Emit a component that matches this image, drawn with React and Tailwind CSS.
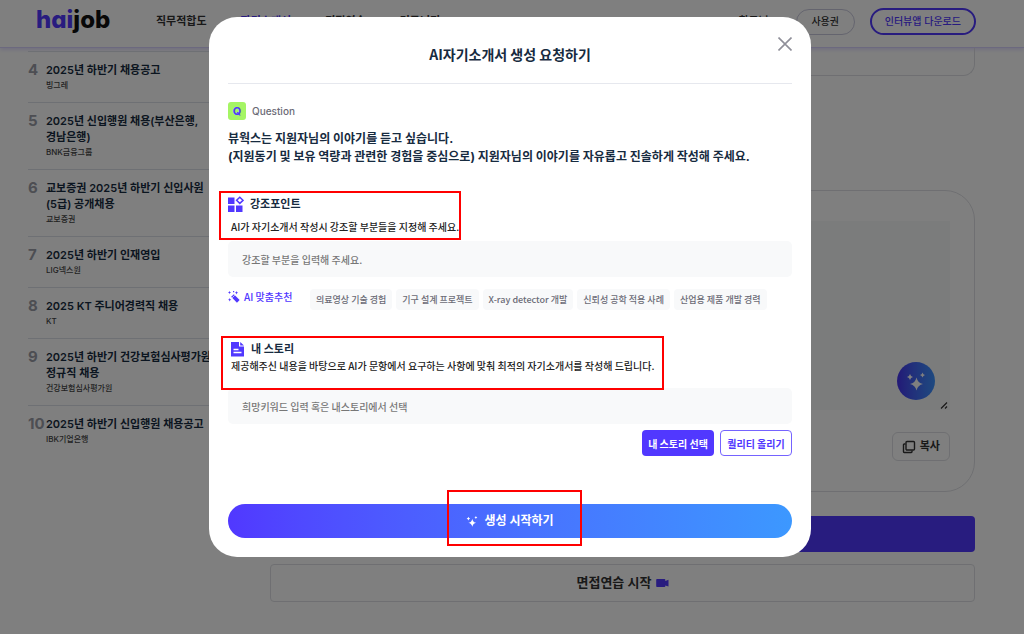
import { useState } from 'react';

const FONT = "font-['Inter','Noto_Sans_CJK_KR',sans-serif]";
const FONT_KR = "font-['Noto_Sans_CJK_KR',sans-serif]";

const jobs = [
  { rank: 4, title: ['2025년 하반기 채용공고'], company: '빙그레' },
  { rank: 5, title: ['2025년 신입행원 채용(부산은행,', '경남은행)'], company: 'BNK금융그룹' },
  { rank: 6, title: ['교보증권 2025년 하반기 신입사원', '(5급) 공개채용'], company: '교보증권' },
  { rank: 7, title: ['2025년 하반기 인재영입'], company: 'LIG넥스원' },
  { rank: 8, title: ['2025 KT 주니어경력직 채용'], company: 'KT' },
  { rank: 9, title: ['2025년 하반기 건강보험심사평가원', '정규직 채용'], company: '건강보험심사평가원' },
  { rank: 10, title: ['2025년 하반기 신입행원 채용공고'], company: 'IBK기업은행' },
];

const keywords = [
  '의료영상 기술 경험',
  '기구 설계 프로젝트',
  'X-ray detector 개발',
  '신뢰성 공학 적용 사례',
  '산업용 제품 개발 경력',
];

function SparkleIcon({ className }) {
  return (
    <svg viewBox="0 0 20 20" fill="currentColor" className={className} aria-hidden="true">
      <path d="M10.500 6.500Q11.800 12 17 13Q11.800 14 10.500 19.500Q9.200 14 4 13Q9.200 12 10.500 6.500Z" />
      <path d="M4 3Q4.600 5.400 7 6Q4.600 6.600 4 9Q3.400 6.600 1 6Q3.400 5.400 4 3Z" />
      <path d="M16.500 1.500Q17 3.500 19 4Q17 4.500 16.500 6.500Q16 4.500 14 4Q16 3.500 16.500 1.500Z" />
    </svg>
  );
}

function WidgetsIcon() {
  return (
    <svg viewBox="0 0 16 16" className="size-4 text-[#5138ff]" aria-hidden="true">
      <rect x="0" y="1.500" width="6.500" height="6.500" fill="currentColor" />
      <rect x="0" y="9.500" width="6.500" height="6.500" fill="currentColor" />
      <rect x="8" y="9.500" width="6.500" height="6.500" fill="currentColor" />
      <path d="M11.800 1.200 15 4.300 11.800 7.400 8.600 4.300Z" fill="none" stroke="currentColor" strokeWidth="1.500" />
    </svg>
  );
}

function DocumentIcon() {
  return (
    <svg viewBox="0 0 13 16" className="h-4 w-[13px]" aria-hidden="true">
      <path d="M0 1h8v4.500h5V15.500H0Z" fill="#5138ff" />
      <path d="M9.200 1 13 4.500H9.200Z" fill="#5138ff" />
      <path d="M2.500 8.500h5M2.500 11.500h8" stroke="#fff" strokeWidth="1.300" />
    </svg>
  );
}

function WandIcon() {
  return (
    <svg viewBox="0 0 12 12" className="size-3 text-[#5138ff]" aria-hidden="true">
      <path d="M4.500 4.500 10.300 10.300" stroke="currentColor" strokeWidth="3.800" />
      <path d="M4.200 6.800 6.800 4.200" stroke="#fff" strokeWidth="0.700" />
      <path d="M1.500 0 2 1.100 3 1.500 2 2 1.500 3 1 2 0 1.500 1 1.100ZM8.500 0 9 1.200 10.200 1.700 9 2.200 8.500 3.400 8 2.200 6.800 1.700 8 1.200ZM1.700 7 2.200 8.200 3.400 8.700 2.200 9.200 1.700 10.400 1.200 9.200 0 8.700 1.200 8.200ZM5 0h1.200v1.200H5Z" fill="currentColor" />
    </svg>
  );
}

function Header() {
  return (
    <header className="flex h-12 shrink-0 items-center border-b border-[#d9d3ff] bg-white pb-1 pr-12 pl-9 shadow-[0_2px_4px_#e4e0ff]">
      <a href="#" className="w-[120px] pb-1 text-[24px] leading-8 font-extrabold text-[#111] [font-feature-settings:'cv11']">
        <span className="text-[#5138ff]">hai</span>job
      </a>
      <nav className="flex flex-1 items-center gap-[34px] text-[11px] font-semibold whitespace-nowrap text-[#333]">
        <a href="#">직무적합도</a>
        <a href="#" className="text-[#5138ff]">자기소개서</a>
        <a href="#">면접연습</a>
        <a href="#">커뮤니티</a>
      </nav>
      <div className="flex items-center gap-[15px] text-[10px] font-medium whitespace-nowrap text-[#333]">
        <a href="#" className="pr-3 text-[11px]">최동님</a>
        <button className="h-[26px] w-[59px] rounded-full border border-[#c9c9dd]">사용권</button>
        <button className="h-[27px] rounded-full border-2 border-[#5138ff] px-[13px] text-[#5138ff]">
          인터뷰앱 다운로드
        </button>
      </div>
    </header>
  );
}

function JobList() {
  return (
    <aside className="w-[198px] shrink-0 pt-[3px]">
      <ol>
        {jobs.map((job) => (
          <li key={job.rank} className="flex border-t border-[#dde1e8] pt-[10px] pb-[9px]">
            <span className="w-[18px] shrink-0 text-[15px] leading-4 font-bold text-[#9a9ca6]">{job.rank}</span>
            <div className="whitespace-nowrap">
              <p className="text-[11px] leading-4 font-semibold text-[#172b40]">
                {job.title.map((line) => (
                  <span key={line} className="block">{line}</span>
                ))}
              </p>
              <p className="text-[8px] leading-[15px] font-medium text-[#444]">{job.company}</p>
            </div>
          </li>
        ))}
      </ol>
    </aside>
  );
}

function Editor() {
  return (
    <main className="min-w-0 flex-1">
      <div className="h-7 rounded-b-xl border border-t-0 border-[#dedfe4]" />
      <section className="mt-[114px] rounded-[30px] border border-[#dedfe4] px-6 py-[30px]">
        <div className="relative">
          <textarea aria-label="자기소개서" className="block h-[189px] w-full resize-none bg-[#f6f8f9]" />
          <button
            aria-label="AI 도우미"
            className="absolute right-[15px] bottom-[10px] flex size-[38px] items-center justify-center rounded-full bg-gradient-to-r from-[#4630ee] to-[#3c93ff] text-white"
          >
            <SparkleIcon className="size-5" />
          </button>
          <svg viewBox="0 0 8 8" className="absolute right-[2px] bottom-[1px] size-2" aria-hidden="true">
            <path d="M1 7.500 7 1.500M5 7.500 7 5.500" stroke="#333" strokeWidth="1.200" />
          </svg>
        </div>
        <div className="mt-[22px] flex justify-end">
          <button className="flex h-[29px] items-center gap-1 rounded-md border border-[#dedfe4] px-[9px] text-[11px] font-semibold text-[#333]">
            <svg viewBox="0 0 14 14" className="size-[14px]" fill="none" stroke="currentColor" strokeWidth="1.400" aria-hidden="true">
              <rect x="4" y="1.500" width="8.500" height="8.500" rx="1" />
              <path d="M3.500 4H2.200Q1.500 4 1.500 4.700V11.800Q1.500 12.500 2.200 12.500H9.300Q10 12.500 10 11.800V10.500" />
            </svg>
            복사
          </button>
        </div>
      </section>
      <button className="mt-6 block h-9 w-full rounded bg-[#5138ff]" aria-label="자기소개서 생성" />
      <button className="mt-3 flex h-[38px] w-full items-center justify-center gap-1 rounded border border-[#dedfe4] text-[13px] font-semibold text-[#333]">
        면접연습 시작
        <svg viewBox="0 0 13 10" className="h-[10px] w-[13px]" fill="#5138ff" aria-hidden="true">
          <path d="M1 1h7.500q.8 0 .8.800V3L12.500 1.800V8.500L9.300 7.500V8.200q0 .8-.8.800H1q-.8 0-.8-.8V1.800Q.2 1 1 1Z" />
        </svg>
      </button>
    </main>
  );
}

function RequestModal() {
  const [points, setPoints] = useState('');
  const [story, setStory] = useState('');

  return (
    <div
      role="dialog"
      aria-labelledby="modal-title"
      className="relative w-full max-w-[602px] rounded-[28px] bg-white px-[19px] pb-[19px] text-[#172b40]"
    >
      <header className="flex h-[67px] items-center justify-center border-b border-[#e6e8ee] pt-2">
        <h2 id="modal-title" className={`${FONT_KR} text-[14px] leading-5 font-bold`}>AI자기소개서 생성 요청하기</h2>
        <button aria-label="닫기" className="absolute top-5 right-[19px] text-[#8f8f99]">
          <svg viewBox="0 0 14 14" className="size-[14px]" stroke="currentColor" strokeWidth="1.600" aria-hidden="true">
            <path d="M0.500 0.500 13.500 13.500M13.500 0.500 0.500 13.500" />
          </svg>
        </button>
      </header>

      <div className="mt-[18px] flex items-center gap-[6px]">
        <span className="flex size-[18px] items-center justify-center rounded-[3px] bg-[#a5f564] text-[11px] font-bold text-[#5138ff]">Q</span>
        <span className="text-[10px] leading-4 font-medium text-[#6b6b76]">Question</span>
      </div>
      <p className="mt-[10px] text-[12px] leading-[18px] font-bold whitespace-nowrap">
        뷰웍스는 지원자님의 이야기를 듣고 싶습니다.
        <br />
        (지원동기 및 보유 역량과 관련한 경험을 중심으로) 지원자님의 이야기를 자유롭고 진솔하게 작성해 주세요.
      </p>

      <section className="relative mt-[30px]">
        <div className="pointer-events-none absolute -top-[5px] -left-[9px] h-[49px] w-[242px] border-2 border-[#ff0000]" />
        <label htmlFor="points" className="flex h-4 items-center gap-[6px] text-[11px] font-bold">
          <WidgetsIcon />
          강조포인트
        </label>
        <p className={`${FONT_KR} mt-2 mb-[7px] pl-[3px] text-[10px] leading-[14px] font-medium whitespace-nowrap text-[#222]`}>
          AI가 자기소개서 작성시 강조할 부분들을 지정해 주세요.
        </p>
        <input
          id="points"
          value={points}
          onChange={(e) => setPoints(e.target.value)}
          placeholder="강조할 부분을 입력해 주세요."
          className={`${FONT_KR} block h-9 w-full rounded-[5px] bg-[#f8f9fa] px-[14px] text-[10px] font-medium placeholder:text-[#777]`}
        />
      </section>

      <div className={`${FONT_KR} mt-3 flex items-start whitespace-nowrap`}>
        <span className="flex w-[82px] shrink-0 items-center gap-1 text-[10px] leading-4 font-medium text-[#5138ff]">
          <WandIcon />
          AI 맞춤추천
        </span>
        <div className="flex gap-1">
          {keywords.map((keyword) => (
            <button
              key={keyword}
              onClick={() => setPoints(keyword)}
              className="h-[21px] rounded bg-[#f8f9fa] px-[6px] text-[9px] font-medium text-[#6b6b76]"
            >
              {keyword}
            </button>
          ))}
        </div>
      </div>

      <section className="relative mt-[31px]">
        <div className="pointer-events-none absolute -top-[5px] -left-[7px] h-[54px] w-[443px] border-2 border-[#ff0000]" />
        <label htmlFor="story" className="flex h-4 items-center gap-[7px] pl-[3px] text-[11px] font-bold">
          <DocumentIcon />
          내 스토리
        </label>
        <p className={`${FONT_KR} mt-[2px] mb-[15px] pl-[3px] text-[10px] leading-[14px] font-medium whitespace-nowrap text-[#222]`}>
          제공해주신 내용을 바탕으로 AI가 문항에서 요구하는 사항에 맞춰 최적의 자기소개서를 작성해 드립니다.
        </p>
        <input
          id="story"
          value={story}
          onChange={(e) => setStory(e.target.value)}
          placeholder="희망키워드 입력 혹은 내스토리에서 선택"
          className={`${FONT_KR} block h-9 w-full rounded-[5px] bg-[#f8f9fa] px-[14px] text-[10px] font-medium placeholder:text-[#777]`}
        />
      </section>

      <div className={`${FONT_KR} mt-[6px] flex justify-end gap-[6px] text-[10px] font-bold whitespace-nowrap`}>
        <button className="h-[26px] w-[72px] rounded bg-[#5138ff] text-white">내 스토리 선택</button>
        <button className="h-[26px] w-[72px] rounded border border-[#7563ff] text-[#5138ff]">퀄리티 올리기</button>
      </div>

      <div className="relative mt-12">
        <button className="flex h-[34px] w-full items-center justify-center gap-[6px] rounded-full bg-gradient-to-r from-[#5138ff] to-[#3c98ff] text-[12px] font-bold text-white">
          <SparkleIcon className="size-3" />
          생성 시작하기
        </button>
        <div className="pointer-events-none absolute -top-[14px] left-[219px] h-14 w-[135px] border-2 border-[#ff0000]" />
      </div>
    </div>
  );
}

export default function App() {
  return (
    <div className={`${FONT} min-h-screen bg-white`}>
      <Header />
      <div className="flex gap-11 pr-[49px] pl-7">
        <JobList />
        <Editor />
      </div>
      <div className="fixed inset-0 flex items-start justify-center overflow-hidden bg-black/50 pt-[17px] pr-1">
        <RequestModal />
      </div>
    </div>
  );
}
